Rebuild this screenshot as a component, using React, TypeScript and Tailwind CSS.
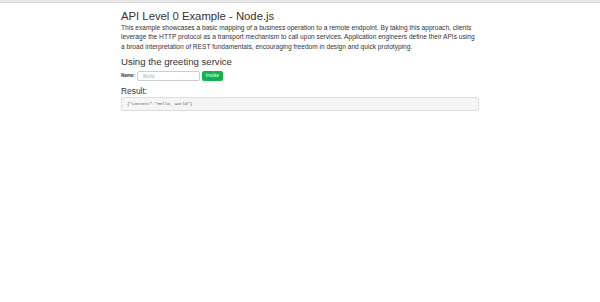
export default function App() {
  return (
    <div className="min-h-screen bg-white font-['Liberation_Sans',Arial,sans-serif] text-[#333]">
      <div className="h-[3px] bg-[#e7e7e7] border-b border-[#dadada]" />
      <main className="mx-auto w-[358px]">
        <h1 className="mt-[6px] text-[11.3px] leading-[14px] font-normal">
          API Level 0 Example - Node.js
        </h1>
        <p className="text-[6.6px] leading-[9.4px]">
          This example showcases a basic mapping of a business operation to a remote endpoint. By taking
          this approach, clients leverage the HTTP protocol as a transport mechanism to call upon services.
          Application engineers define their APIs using a broad interpretation of REST fundamentals,
          encouraging freedom in design and quick prototyping.
        </p>
        <h2 className="mt-[5px] mb-[3px] text-[9.6px] leading-[12px] font-normal">
          Using the greeting service
        </h2>
        <form className="flex items-center gap-[2px]" onSubmit={(e) => e.preventDefault()}>
          <label className="text-[4.5px] font-bold">Name:</label>
          <input
            placeholder="World"
            className="h-[10px] w-[63px] rounded-[2px] border border-[#ccc] px-[5px] text-[4.5px] placeholder:text-[#aaa] outline-none"
          />
          <button className="h-[10px] rounded-[2px] bg-[#12b24f] px-[4px] text-[4.5px] text-white">
            Invoke
          </button>
        </form>
        <h3 className="mt-[5px] mb-[1px] text-[8.4px] leading-[10px] font-normal">Result:</h3>
        <pre className="rounded-[2px] border border-[#ddd] bg-[#f5f5f5] px-[5px] py-[3.5px] font-['Liberation_Mono',monospace] text-[4.2px] leading-[5px] text-[#555]">
          {'{"content":"Hello, World"}'}
        </pre>
      </main>
    </div>
  );
}
